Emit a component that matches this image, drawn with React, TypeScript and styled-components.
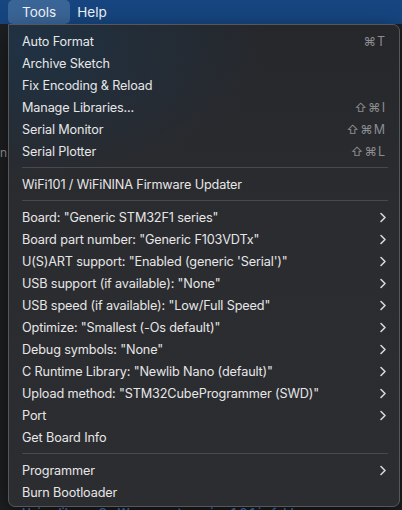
import React from "react";
import styled, { createGlobalStyle } from "styled-components";

const Global = createGlobalStyle`
  html, body { margin: 0; padding: 0; background: #1d1e20; }
  body { width: 402px; height: 510px; overflow: hidden; font-family: Inter, "Noto Sans", sans-serif; -webkit-font-smoothing: antialiased; }
`;

const Page = styled.div`
  width: 402px;
  height: 510px;
  display: flex;
  flex-direction: column;
  overflow: hidden;
`;

const MenuBar = styled.div`
  height: 24px;
  flex: 0 0 24px;
  background: #16457f;
  display: flex;
  align-items: center;
  padding-left: 8px;
`;

const BarItem = styled.div<{ $active?: boolean }>`
  height: 24px;
  display: flex;
  align-items: center;
  padding: ${(p) => (p.$active ? "0 14px" : "0 7px")};
  border-radius: 5px;
  font-size: 13.5px;
  color: #f2f4f8;
  background: ${(p) => (p.$active ? "#3a6597" : "transparent")};
`;

const Body = styled.div`
  position: relative;
  flex: 1;
  background: #1e1f22;
`;

const GutterText = styled.div`
  position: absolute;
  left: 0;
  top: 121px;
  font-size: 12px;
  color: #9a9a9a;
`;

const UnderText = styled.div`
  position: absolute;
  left: 22px;
  top: 481px;
  font-size: 12px;
  color: #3f86c8;
  font-weight: 600;
  white-space: nowrap;
`;

const Menu = styled.div`
  position: absolute;
  left: 8px;
  top: 0;
  width: 392px;
  box-sizing: border-box;
  padding: 5px 0 3px 0;
  border-radius: 0 7px 7px 7px;
  border: 1px solid #55575b;
  background: radial-gradient(ellipse 260px 140px at 0px 20px, #1f3244 0%, rgba(31, 50, 68, 0) 100%),
    linear-gradient(180deg, #26272b 0%, #2b2c2f 40%, #2c2d30 100%);
  box-shadow: 0 8px 24px rgba(0, 0, 0, 0.5);
`;

const Row = styled.div`
  height: 22px;
  display: flex;
  align-items: center;
  padding: 0 12px 0 13px;
  font-size: 12.7px;
  letter-spacing: -0.15px;
  color: #e6e6e8;
  white-space: nowrap;
`;

const Label = styled.span`
  flex: 1;
`;

const Shortcut = styled.span`
  color: #8b8c8f;
  font-size: 12.5px;
  letter-spacing: 1px;
  margin-right: 1px;
`;

const Sep = styled.div`
  height: 11px;
  display: flex;
  align-items: center;
  padding: 0 11px 0 13px;
  &::after {
    content: "";
    flex: 1;
    height: 1px;
    background: #47494d;
  }
`;

const Chevron = () => (
  <svg width="8" height="11" viewBox="0 0 8 11">
    <path d="M2 1.5 L6 5.5 L2 9.5" fill="none" stroke="#d8d8da" strokeWidth="1.6" strokeLinecap="round" strokeLinejoin="round" />
  </svg>
);

type Item =
  | { sep: true }
  | { label: string; shortcut?: string; sub?: boolean };

const items: Item[] = [
  { label: "Auto Format", shortcut: "⌘T" },
  { label: "Archive Sketch" },
  { label: "Fix Encoding & Reload" },
  { label: "Manage Libraries...", shortcut: "⇧⌘I" },
  { label: "Serial Monitor", shortcut: "⇧⌘M" },
  { label: "Serial Plotter", shortcut: "⇧⌘L" },
  { sep: true },
  { label: "WiFi101 / WiFiNINA Firmware Updater" },
  { sep: true },
  { label: 'Board: "Generic STM32F1 series"', sub: true },
  { label: 'Board part number: "Generic F103VDTx"', sub: true },
  { label: 'U(S)ART support: "Enabled (generic \'Serial\')"', sub: true },
  { label: 'USB support (if available): "None"', sub: true },
  { label: 'USB speed (if available): "Low/Full Speed"', sub: true },
  { label: 'Optimize: "Smallest (-Os default)"', sub: true },
  { label: 'Debug symbols: "None"', sub: true },
  { label: 'C Runtime Library: "Newlib Nano (default)"', sub: true },
  { label: 'Upload method: "STM32CubeProgrammer (SWD)"', sub: true },
  { label: "Port", sub: true },
  { label: "Get Board Info" },
  { sep: true },
  { label: "Programmer", sub: true },
  { label: "Burn Bootloader" },
];

export default function App() {
  return (
    <Page>
      <Global />
      <MenuBar>
        <BarItem $active>Tools</BarItem>
        <BarItem>Help</BarItem>
      </MenuBar>
      <Body>
        <GutterText>n</GutterText>
        <UnderText>Using library SrcWrapper at version 1.0.1 in folder</UnderText>
        <Menu>
          {items.map((it, i) =>
            "sep" in it ? (
              <Sep key={i} />
            ) : (
              <Row key={i}>
                <Label>{it.label}</Label>
                {it.shortcut && <Shortcut>{it.shortcut}</Shortcut>}
                {it.sub && <Chevron />}
              </Row>
            )
          )}
        </Menu>
      </Body>
    </Page>
  );
}
